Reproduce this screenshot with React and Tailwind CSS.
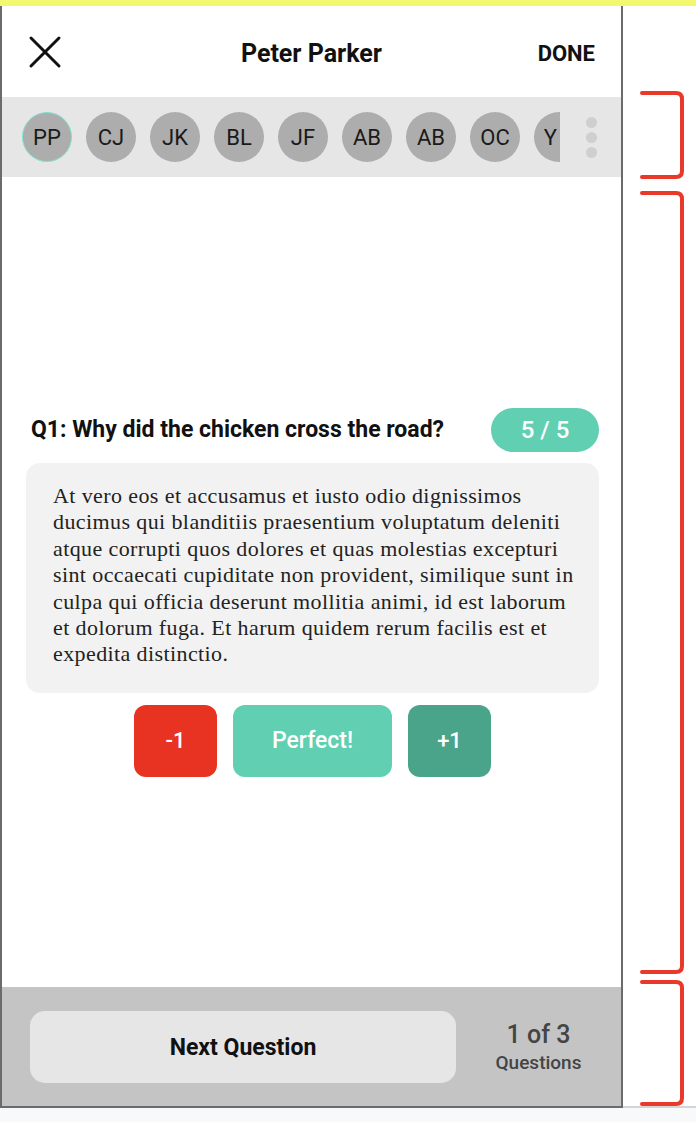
const AVATARS = ['PP', 'CJ', 'JK', 'BL', 'JF', 'AB', 'AB', 'OC']

const BODY =
  'At vero eos et accusamus et iusto odio dignissimos ducimus qui blanditiis praesentium voluptatum deleniti atque corrupti quos dolores et quas molestias excepturi sint occaecati cupiditate non provident, similique sunt in culpa qui officia deserunt mollitia animi, id est laborum et dolorum fuga. Et harum quidem rerum facilis est et expedita distinctio.'

function Bracket({ height }) {
  const h = height
  return (
    <svg width="46" height={h} viewBox={`0 0 46 ${h}`} fill="none" className="block shrink-0">
      <path
        d={`M2 2 L36 2 Q42 2 42 8 L42 ${h - 8} Q42 ${h - 2} 36 ${h - 2} L2 ${h - 2}`}
        stroke="#e8392b"
        strokeWidth="4"
        strokeLinecap="round"
        strokeLinejoin="round"
      />
    </svg>
  )
}

function CloseIcon() {
  return (
    <svg width="34" height="34" viewBox="0 0 34 34" fill="none">
      <path d="M3 3 L31 31 M31 3 L3 31" stroke="#111" strokeWidth="3" strokeLinecap="round" />
    </svg>
  )
}

function Avatar({ label, active }) {
  return (
    <div
      className={`flex h-[50px] w-[50px] shrink-0 items-center justify-center rounded-full bg-[#adadad] text-[22px] text-[#1a1a1a] ${
        active ? 'border-[1.5px] border-[#7fe3cf]' : ''
      }`}
    >
      {label}
    </div>
  )
}

export default function App() {
  return (
    <div className="flex h-[1122px] w-[696px] flex-col overflow-hidden bg-white font-['Roboto',sans-serif]">
      <div className="h-[6px] shrink-0 bg-[#f2f86f]" />

      <div className="flex h-[1100px] shrink-0">
        {/* phone frame */}
        <div className="flex w-[623px] shrink-0 flex-col border-x-2 border-[#6b6b6b]">
          <div className="grid h-[91px] shrink-0 grid-cols-3 items-center px-[26px]">
            <div className="justify-self-start">
              <CloseIcon />
            </div>
            <div className="justify-self-center whitespace-nowrap pt-[4px] text-[25px] font-bold text-[#111]">
              Peter Parker
            </div>
            <div className="justify-self-end pt-[4px] text-[22px] font-bold text-[#111]">DONE</div>
          </div>

          <div className="flex h-[80px] shrink-0 items-center bg-[#e6e6e6]">
            <div className="flex w-[559px] shrink-0 gap-[14px] pl-[20px]">
              {AVATARS.map((a, i) => (
                <Avatar key={i} label={a} active={i === 0} />
              ))}
              {/* last avatar, cut by the strip edge */}
              <div className="flex h-[50px] w-[26px] shrink-0 items-center justify-end rounded-l-full bg-[#adadad] pr-[3px] text-[22px] text-[#1a1a1a]">
                Y
              </div>
            </div>
            <div className="flex flex-1 flex-col items-center gap-[4px]">
              <span className="h-[11px] w-[11px] rounded-full bg-[#cfcfcf]" />
              <span className="h-[11px] w-[11px] rounded-full bg-[#cfcfcf]" />
              <span className="h-[11px] w-[11px] rounded-full bg-[#cfcfcf]" />
            </div>
          </div>

          <div className="flex h-[810px] shrink-0 flex-col pl-[24px] pr-[22px] pt-[231px]">
            <div className="flex items-center justify-between pl-[5px]">
              <div className="whitespace-nowrap text-[23px] font-bold text-[#111]">
                Q1: Why did the chicken cross the road?
              </div>
              <div className="flex h-[44px] w-[108px] items-center justify-center rounded-full bg-[#61cfb2] text-[24px] font-medium text-white">
                5 / 5
              </div>
            </div>
            <div className="mt-[11px] rounded-[14px] bg-[#f2f2f2] pb-[25px] pl-[27px] pr-[22px] pt-[20px] font-['Liberation_Serif',serif] text-[22px] leading-[26.4px] tracking-[0.4px] text-[#222]">
              {BODY}
            </div>
            <div className="mt-[12px] flex justify-center gap-[16px]">
              <button className="flex h-[72px] w-[83px] items-center justify-center rounded-[12px] bg-[#e83323] text-[22px] font-medium text-white">
                -1
              </button>
              <button className="flex h-[72px] w-[159px] items-center justify-center rounded-[12px] bg-[#61cfb2] text-[23px] font-medium text-white">
                Perfect!
              </button>
              <button className="flex h-[72px] w-[83px] items-center justify-center rounded-[12px] bg-[#4aa48a] text-[22px] font-medium text-white">
                +1
              </button>
            </div>
          </div>

          <div className="flex h-[119px] shrink-0 items-center bg-[#c4c4c4] pl-[28px]">
            <button className="flex h-[72px] w-[426px] items-center justify-center rounded-[15px] bg-[#e6e6e6] pt-[4px] text-[23px] font-bold text-[#111]">
              Next Question
            </button>
            <div className="flex flex-1 flex-col items-center pt-[2px] text-[#444]">
              <div className="text-[25px] font-medium leading-[30px]">1 of 3</div>
              <div className="text-[19px] font-medium leading-[26px]">Questions</div>
            </div>
          </div>
        </div>

        {/* annotation brackets */}
        <div className="flex flex-col pl-[17px] pt-[85px]">
          <Bracket height={88} />
          <div className="h-[12px]" />
          <Bracket height={783} />
          <div className="h-[6px]" />
          <Bracket height={126} />
        </div>
      </div>

      <div className="flex h-[2px] shrink-0">
        <div className="w-[623px] bg-[#6b6b6b]" />
        <div className="flex-1 bg-[#d4d4d4]" />
      </div>
      <div className="flex-1 bg-[#f8f9fb]" />
    </div>
  )
}
